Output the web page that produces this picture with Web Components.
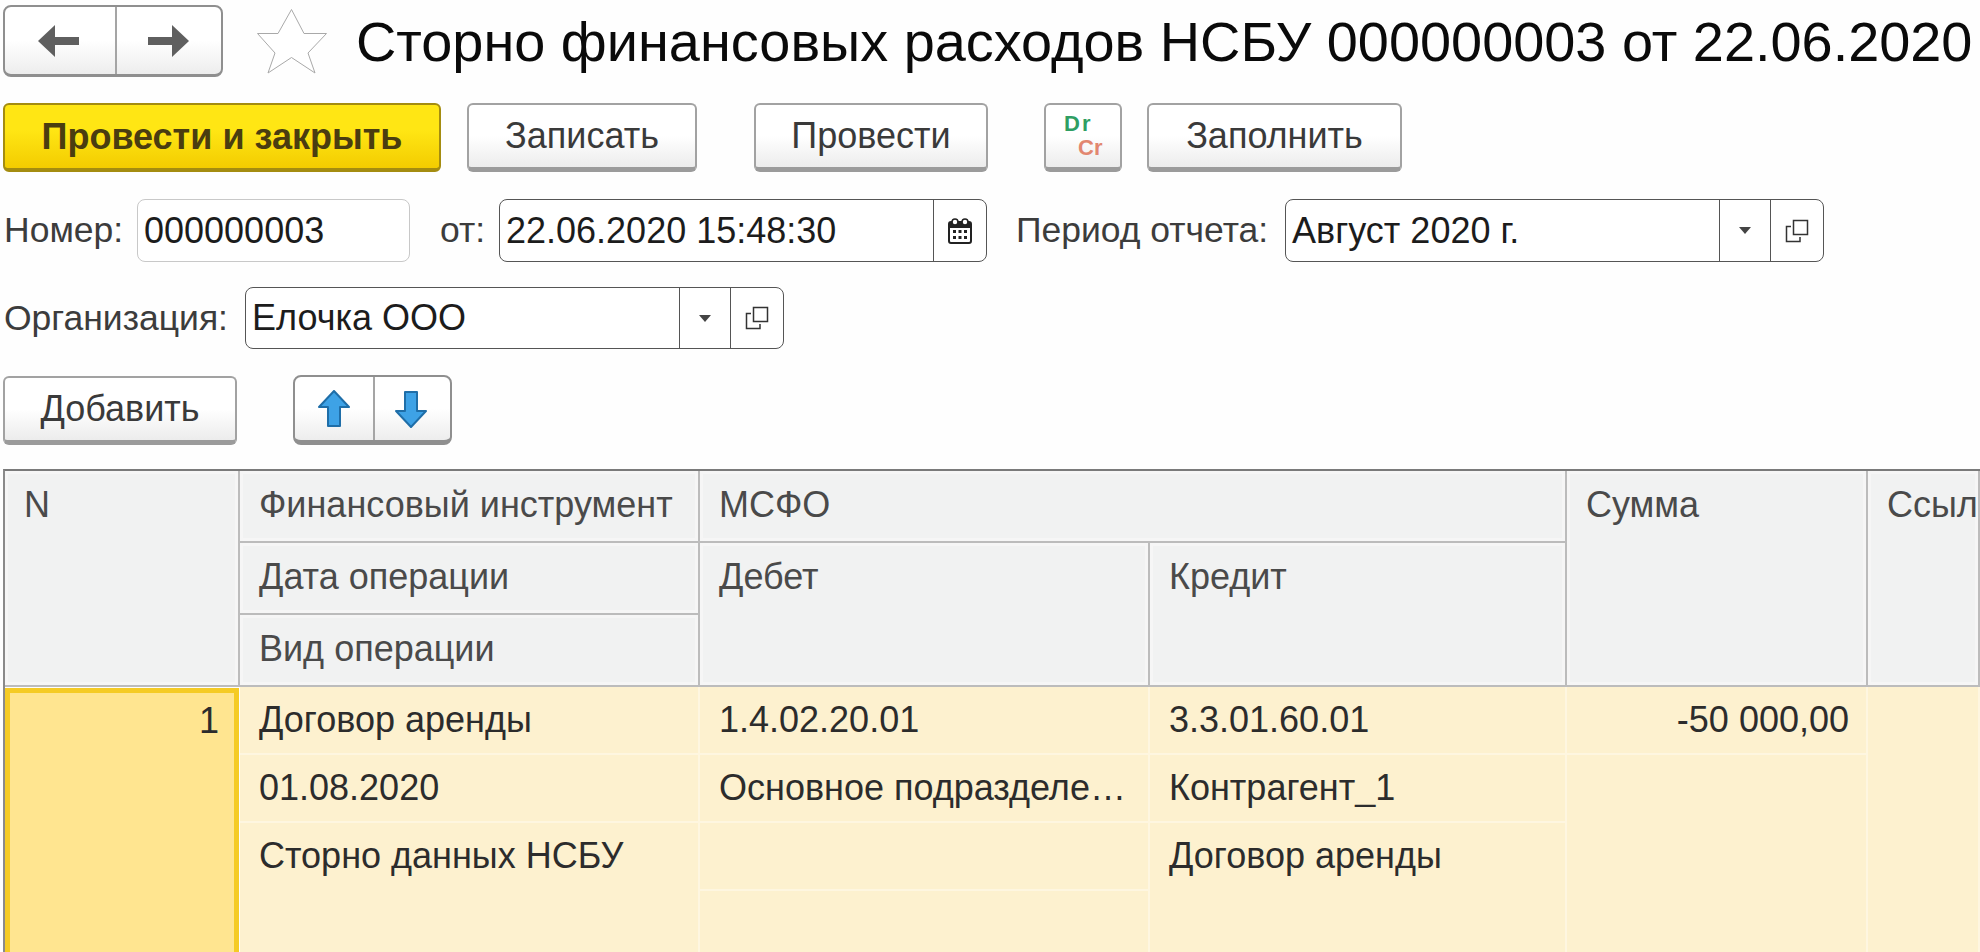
<!DOCTYPE html>
<html lang="ru">
<head>
<meta charset="utf-8">
<title>Сторно финансовых расходов НСБУ</title>
<style>
  html, body { margin: 0; height: 952px; overflow: hidden; background: #fefefe; }
  body { font-family: "Liberation Sans", Arial, sans-serif; font-size: 36px; color: #333; }
  .row { display: flex; align-items: center; }
  .head { margin: 5px 0 0 3px; height: 72px; }
  .tools { margin: 26px 0 0 3px; height: 69px; }
  .line1 { margin: 27px 0 0 4px; height: 63px; }
  .line2 { margin: 25px 0 0 4px; height: 62px; }
  .table-tools { margin: 26px 0 0 3px; height: 70px; }
</style>
</head>
<body>

<div class="row head">
  <split-button kind="nav" w1="112" w2="106"></split-button>
  <fav-star></fav-star>
  <page-title>Сторно финансовых расходов НСБУ 000000003 от 22.06.2020</page-title>
</div>

<div class="row tools">
  <ui-button primary style="width:438px;margin-right:26px">Провести и закрыть</ui-button>
  <ui-button style="width:230px;margin-right:57px">Записать</ui-button>
  <ui-button style="width:234px;margin-right:56px">Провести</ui-button>
  <ui-button style="width:78px;margin-right:25px"><drcr-icon></drcr-icon></ui-button>
  <ui-button style="width:255px">Заполнить</ui-button>
</div>

<div class="row line1">
  <field-label style="width:133px">Номер:</field-label>
  <text-field style="width:273px" light>000000003</text-field>
  <field-label style="margin-left:30px;width:59px">от:</field-label>
  <text-field style="width:488px" buttons="calendar">22.06.2020 15:48:30</text-field>
  <field-label style="margin-left:29px;width:269px">Период отчета:</field-label>
  <text-field style="width:539px" buttons="drop,copy">Август 2020 г.</text-field>
</div>

<div class="row line2">
  <field-label style="width:241px">Организация:</field-label>
  <text-field style="width:539px" buttons="drop,copy">Елочка ООО</text-field>
</div>

<div class="row table-tools">
  <ui-button style="width:234px;margin-right:56px">Добавить</ui-button>
  <split-button kind="move" w1="80" w2="77"></split-button>
</div>

<doc-table>
  <doc-cell head style="grid-area:1/1/4/2">N</doc-cell>
  <doc-cell head style="grid-area:1/2/2/3">Финансовый инструмент</doc-cell>
  <doc-cell head style="grid-area:2/2/3/3">Дата операции</doc-cell>
  <doc-cell head style="grid-area:3/2/4/3">Вид операции</doc-cell>
  <doc-cell head style="grid-area:1/3/2/5">МСФО</doc-cell>
  <doc-cell head style="grid-area:2/3/4/4">Дебет</doc-cell>
  <doc-cell head style="grid-area:2/4/4/5">Кредит</doc-cell>
  <doc-cell head style="grid-area:1/5/4/6">Сумма</doc-cell>
  <doc-cell head style="grid-area:1/6/4/7">Ссыл</doc-cell>

  <doc-cell current style="grid-area:4/1/8/2">1</doc-cell>
  <doc-cell style="grid-area:4/2/5/3">Договор аренды</doc-cell>
  <doc-cell style="grid-area:5/2/6/3">01.08.2020</doc-cell>
  <doc-cell style="grid-area:6/2/8/3">Сторно данных НСБУ</doc-cell>
  <doc-cell style="grid-area:4/3/5/4">1.4.02.20.01</doc-cell>
  <doc-cell style="grid-area:5/3/6/4">Основное подразделе…</doc-cell>
  <doc-cell style="grid-area:6/3/7/4"></doc-cell>
  <doc-cell style="grid-area:7/3/8/4"></doc-cell>
  <doc-cell style="grid-area:4/4/5/5">3.3.01.60.01</doc-cell>
  <doc-cell style="grid-area:5/4/6/5">Контрагент_1</doc-cell>
  <doc-cell style="grid-area:6/4/8/5">Договор аренды</doc-cell>
  <doc-cell number style="grid-area:4/5/5/6">-50 000,00</doc-cell>
  <doc-cell style="grid-area:5/5/8/6"></doc-cell>
  <doc-cell style="grid-area:4/6/8/7"></doc-cell>
</doc-table>

<script>
  const ICONS = {
    back: `<svg width="41" height="32" viewBox="0 0 41 32"><path d="M0 16 L17 0 V12 H41 V20 H17 V32 Z" fill="#5f5f5f"/></svg>`,
    forward: `<svg width="41" height="32" viewBox="0 0 41 32"><path d="M41 16 L24 0 V12 H0 V20 H24 V32 Z" fill="#5f5f5f"/></svg>`,
    up: `<svg width="32" height="38" viewBox="0 0 32 38"><path d="M16 1 L31 17 H22 V36 H10 V17 H1 Z" fill="#3ea2e6" stroke="#1f6ea8" stroke-width="2" stroke-linejoin="round"/></svg>`,
    down: `<svg width="32" height="38" viewBox="0 0 32 38"><path d="M16 37 L31 21 H22 V2 H10 V21 H1 Z" fill="#3ea2e6" stroke="#1f6ea8" stroke-width="2" stroke-linejoin="round"/></svg>`,
    calendar: `<svg width="24" height="26" viewBox="0 0 24 26"><rect x="1" y="4" width="22" height="21" rx="2" fill="#fff" stroke="#222" stroke-width="2"/><rect x="1" y="4" width="22" height="6" fill="#222"/><circle cx="7" cy="4" r="3" fill="#fff" stroke="#222" stroke-width="1.6"/><circle cx="17" cy="4" r="3" fill="#fff" stroke="#222" stroke-width="1.6"/><g fill="#222"><rect x="5" y="12" width="3" height="3"/><rect x="10.5" y="12" width="3" height="3"/><rect x="16" y="12" width="3" height="3"/><rect x="5" y="18" width="3" height="3"/><rect x="10.5" y="18" width="3" height="3"/><rect x="16" y="18" width="3" height="3"/></g></svg>`,
    drop: `<svg width="12" height="7" viewBox="0 0 12 7"><path d="M0 0 H12 L6 7 Z" fill="#444"/></svg>`,
    copy: `<svg width="24" height="24" viewBox="0 0 24 24" fill="none" stroke="#333" stroke-width="1.5"><rect x="8.5" y="1.5" width="14" height="14"/><path d="M6 7.5 H1.5 V22.5 H15 V18"/></svg>`
  };

  class PageTitle extends HTMLElement {
    constructor() {
      super();
      this.attachShadow({mode: 'open'}).innerHTML = `
        <style>
          :host { display: block; margin-left: 29px; font-size: 55.87px; color: #0a0a0a; white-space: nowrap; }
        </style>
        <slot></slot>`;
    }
  }

  class FavStar extends HTMLElement {
    constructor() {
      super();
      this.attachShadow({mode: 'open'}).innerHTML = `
        <style>
          :host { display: block; margin-left: 34px; width: 70px; height: 65px; }
          svg { display: block; }
        </style>
        <svg width="70" height="65" viewBox="0 0 70 65">
          <path d="M34.5 .5 L47 24.5 L69.5 24.5 L51 44 L58 64 L34.5 48.5 L11 64 L18 44 L.5 24.5 L21 24.5 Z" fill="#fff" stroke="#a9a9a9" stroke-width="1"/>
        </svg>`;
    }
  }

  class UiButton extends HTMLElement {
    constructor() {
      super();
      this.attachShadow({mode: 'open'}).innerHTML = `
        <style>
          :host {
            display: flex; align-items: center; justify-content: center; box-sizing: border-box;
            height: 69px; border-radius: 6px; white-space: nowrap; color: #3a3a3a;
            border: 2px solid #a2a2a2; border-bottom: 5px solid #9b9b9b;
            background: linear-gradient(#fff 50%, #ececec);
          }
          :host([primary]) {
            font-weight: bold; color: #4a3d10;
            border: 2px solid #a48c10; border-bottom: 4px solid #a48c10;
            background: linear-gradient(#ffe614 40%, #f3cc00);
          }
        </style>
        <slot></slot>`;
    }
  }

  class DrcrIcon extends HTMLElement {
    constructor() {
      super();
      this.attachShadow({mode: 'open'}).innerHTML = `
        <style>
          :host { display: block; width: 38px; height: 48px; font: bold 22px/24px "Liberation Sans", sans-serif; }
          div { color: #2f9e63; letter-spacing: 2px; }
          div + div { color: #e28770; padding-left: 14px; letter-spacing: 0; }
        </style>
        <div>Dr</div><div>Cr</div>`;
    }
  }

  class SplitButton extends HTMLElement {
    constructor() {
      super();
      const move = this.getAttribute('kind') === 'move';
      const first = move ? ICONS.up : ICONS.back;
      const second = move ? ICONS.down : ICONS.forward;
      this.attachShadow({mode: 'open'}).innerHTML = `
        <style>
          :host {
            display: flex; border-radius: 8px; height: 100%;
            box-sizing: border-box; background: linear-gradient(#fff 50%, #ededed);
            border: 2px solid #8f8f8f; border-bottom-width: ${move ? 5 : 3}px;
          }
          .part { display: flex; align-items: center; justify-content: center; box-sizing: border-box; }
          .part + .part { border-left: 2px solid #a5a5a5; }
        </style>
        <div class="part" style="width:${this.getAttribute('w1') - 2}px;padding-right:${move ? 0 : 4}px">${first}</div>
        <div class="part" style="width:${this.getAttribute('w2')}px;padding-right:${move ? 4 : 2}px">${second}</div>`;
    }
  }

  class FieldLabel extends HTMLElement {
    constructor() {
      super();
      this.attachShadow({mode: 'open'}).innerHTML = `
        <style>
          :host { display: block; flex: none; font-size: 35.5px; color: #3c3c3c; white-space: nowrap; }
        </style>
        <slot></slot>`;
    }
  }

  class TextField extends HTMLElement {
    constructor() {
      super();
      const buttons = (this.getAttribute('buttons') || '').split(',').filter(Boolean);
      const parts = buttons.map(b => `<div class="btn ${b}">${ICONS[b]}</div>`).join('');
      this.attachShadow({mode: 'open'}).innerHTML = `
        <style>
          :host {
            display: flex; flex: none; box-sizing: border-box; height: 100%; border-radius: 8px;
            border: 1px solid #555; background: #fff; color: #1c1c1c; white-space: nowrap;
          }
          :host([light]) { border-color: #c8c8c8; }
          .val { flex: 1; padding-left: 6px; align-self: center; }
          .btn { display: flex; align-items: center; justify-content: center; width: 50px; border-left: 1px solid #555; }
          .btn.calendar, .btn.copy { width: 52px; }
        </style>
        <div class="val"><slot></slot></div>${parts}`;
    }
  }

  class DocTable extends HTMLElement {
    constructor() {
      super();
      this.attachShadow({mode: 'open'}).innerHTML = `
        <style>
          :host {
            display: grid; margin: 24px 0 0 3px; width: 1977px;
            grid-template-columns: 235px 460px 450px 417px 301px 112px;
            grid-template-rows: 72px 72px 72px 68px 68px 68px 68px;
            border-top: 2px solid #7a7a7a; border-left: 2px solid #8a8a8a; box-sizing: border-box;
          }
        </style>
        <slot></slot>`;
    }
  }

  class DocCell extends HTMLElement {
    constructor() {
      super();
      this.attachShadow({mode: 'open'}).innerHTML = `
        <style>
          :host {
            display: block; box-sizing: border-box; padding: 12px 17px 0 19px; overflow: hidden; white-space: nowrap;
            background: #fdf1cf; color: #2c2c2c; border-right: 2px solid #fef6e0; border-bottom: 2px solid #fef6e0;
          }
          :host([head]) {
            background: #f1f2f2; color: #4a4a4a; padding-top: 13px;
            border-right: 2px solid #bcbcbc; border-bottom: 2px solid #bcbcbc;
            box-shadow: inset 0 0 0 3px #f6f6f6;
          }
          :host([number]) { text-align: right; }
          :host([current]) {
            text-align: right; background: #ffe590; border: 5px solid #f5cb25; padding: 7px 15px 0 0; margin: 1px 1px 0 0;
          }
        </style>
        <slot></slot>`;
    }
  }

  customElements.define('page-title', PageTitle);
  customElements.define('fav-star', FavStar);
  customElements.define('ui-button', UiButton);
  customElements.define('drcr-icon', DrcrIcon);
  customElements.define('split-button', SplitButton);
  customElements.define('field-label', FieldLabel);
  customElements.define('text-field', TextField);
  customElements.define('doc-table', DocTable);
  customElements.define('doc-cell', DocCell);
</script>
</body>
</html>
